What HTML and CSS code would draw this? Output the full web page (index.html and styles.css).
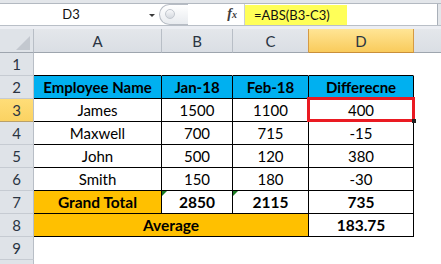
FILE: index.html
```html
<!DOCTYPE html>
<html>
<head>
<meta charset="utf-8">
<title>Sheet</title>
<link rel="stylesheet" href="styles.css">
</head>
<body>
<div class="fbar">
  <div class="frow">
    <div class="namebox"><span class="nb-text">D3</span><span class="nb-arrow"></span></div>
    <div class="splitter"><span class="knob"></span></div>
    <div class="fxzone"><span class="fx">f<span class="fx-x">x</span></span></div>
    <div class="formula"><span class="ftext">=ABS(B3-C3)</span></div>
    <div class="fend"></div>
  </div>
  <div class="fsep"></div>
</div>
<div class="sheet">
  <div class="corner"><svg class="tri" width="16" height="16" viewBox="0 0 16 16"><polygon points="15,1 15,15 1,15" fill="#c3c8cf"/></svg></div>
  <div class="ch">A</div>
  <div class="ch">B</div>
  <div class="ch pre-sel">C</div>
  <div class="ch sel">D</div>
  <div class="ch last"></div>

  <div class="rh">1</div>
  <div class="c tt"></div><div class="c tt"></div><div class="c tt"></div><div class="c tt"></div><div class="c"></div>

  <div class="rh">2</div>
  <div class="c t hd">Employee Name</div><div class="c t hd">Jan-18</div><div class="c t hd">Feb-18</div><div class="c t hd">Differecne</div><div class="c"></div>

  <div class="rh rsel">3</div>
  <div class="c t">James</div><div class="c t">1500</div><div class="c t">1100</div><div class="c t">400</div><div class="c"></div>

  <div class="rh">4</div>
  <div class="c t">Maxwell</div><div class="c t">700</div><div class="c t">715</div><div class="c t">-15</div><div class="c"></div>

  <div class="rh">5</div>
  <div class="c t">John</div><div class="c t">500</div><div class="c t">120</div><div class="c t">380</div><div class="c"></div>

  <div class="rh">6</div>
  <div class="c t">Smith</div><div class="c t">150</div><div class="c t">180</div><div class="c t">-30</div><div class="c"></div>

  <div class="rh">7</div>
  <div class="c t or b">Grand Total</div><div class="c t b"><span class="err"></span>2850</div><div class="c t b"><span class="err"></span>2115</div><div class="c t b">735</div><div class="c"></div>

  <div class="rh">8</div>
  <div class="c t or b span3">Average</div><div class="c t b">183.75</div><div class="c"></div>

  <div class="rh">9</div>
  <div class="c"></div><div class="c"></div><div class="c"></div><div class="c"></div><div class="c"></div>

  <div class="rh"></div>
  <div class="c"></div><div class="c"></div><div class="c"></div><div class="c"></div><div class="c"></div>

  <div class="selbox"><span class="handle"></span></div>
</div>
</body>
</html>
```

FILE: styles.css
```css
* { box-sizing: border-box; margin: 0; padding: 0; }
html, body { width: 441px; height: 264px; overflow: hidden; background: #fff; }
body { font-family: Lato, "Liberation Sans", sans-serif; color: #000; }

/* formula bar */
.fbar { height: 29px; background: #e3e6ea; padding-top: 3px; display: flex; flex-direction: column; }
.frow { height: 22px; display: flex; background: #fff; border-top: 1px solid #b3b9c1; }
.fsep { flex: 1; border-top: 1px solid #b9bfc7; background: #eceef3; }

.namebox { width: 159px; position: relative; display: flex; align-items: center; }
.nb-text { width: 142px; text-align: center; font-size: 13px; line-height: 21px; color: #111; }
.nb-arrow { position: absolute; left: 149px; top: 10px; width: 0; height: 0;
  border-left: 3px solid transparent; border-right: 3px solid transparent; border-top: 3px solid #3a3a3a; }

.splitter { width: 29px; height: 21px; position: relative; border: 1px solid #b7bcc4; border-right: none;
  border-radius: 11px 0 0 11px; background: linear-gradient(#ffffff, #e8ebef); }
.knob { position: absolute; left: 5px; top: 4px; width: 10px; height: 10px; border-radius: 50%;
  border: 1px solid #c2c7ce; background: linear-gradient(#f7f8fa, #d5d9df); }

.fxzone { width: 56px; display: flex; justify-content: flex-end; align-items: center; padding-right: 7px; }
.fx { font-family: "Liberation Serif", serif; font-style: italic; font-weight: bold; font-size: 14px; color: #3c3c3c; line-height: 14px; }
.fx-x { font-size: 10px; }

.formula { flex: 1; border-left: 1px solid #c9ced5; display: flex; align-items: stretch; padding-top: 1px; }
.ftext { background: #ffff58; width: 102px; padding-left: 9px; font-size: 13px; line-height: 20px; color: #111; }
.fend { width: 4px; border-left: 1px solid #a9b0b9; background: #e3e6ea; }

/* sheet grid */
.sheet { position: relative; display: grid;
  grid-template-columns: 34px 128px 71px 76px 105px 27px;
  grid-template-rows: 24px repeat(10, 23px); }

.corner { background: #dfe3e8; border-right: 1px solid #b8bec6; border-bottom: 1px solid #9ea5ae; position: relative; }
.tri { position: absolute; right: 2px; bottom: 1px; }

.ch { background: linear-gradient(#e4e7eb, #dadee4); border-right: 1px solid #b8bec6; border-bottom: 1px solid #9ea5ae;
  text-align: center; font-size: 15px; line-height: 22px; padding-top: 1px; color: #2a3442; }
.ch.pre-sel { border-right-color: #d59a44; }
.ch.sel { background: linear-gradient(#ffe595, #f9cb5c); border-right-color: #d59a44; border-bottom-color: #c98f3a; }
.ch.last { border-right: none; }

.rh { background: #dfe3e8; border-right: 1px solid #b8bec6; border-bottom: 1px solid #c6cbd2;
  text-align: center; font-size: 15px; line-height: 22px; color: #2a3442; }
.rh.rsel { background: linear-gradient(#ffdd78, #fbd262); border-bottom-color: #b9a06a; }

.c { border-right: 1px solid transparent; border-bottom: 1px solid transparent; font-size: 15px; line-height: 22px;
  text-align: center; white-space: nowrap; position: relative; }
.c.tt { border-bottom-color: #000; }
.c.t { border-right-color: #000; border-bottom-color: #000; }
.c.hd { background: #00b0f0; font-weight: bold; }
.c.or { background: #ffc000; }
.c.b { font-weight: bold; font-size: 15.5px; }
.c.span3 { grid-column: span 3; }

.err { position: absolute; left: 0; top: 0; width: 0; height: 0;
  border-top: 5px solid #1a7a22; border-right: 5px solid transparent; }

.selbox { position: absolute; left: 307px; top: 68px; width: 108px; height: 25px; border: 3px solid #ea1a22; }
.handle { position: absolute; right: -4px; bottom: -4px; width: 4px; height: 4px; background: #222; }
```
